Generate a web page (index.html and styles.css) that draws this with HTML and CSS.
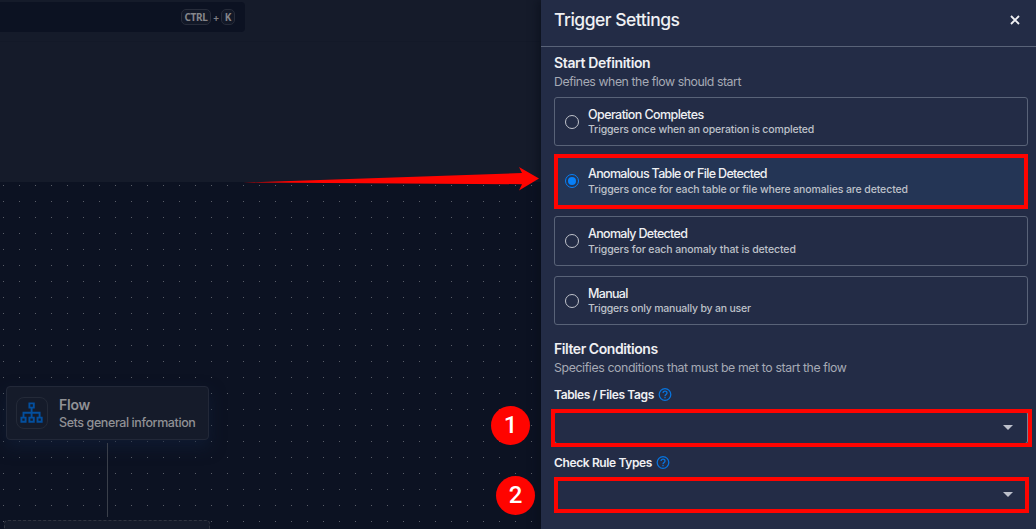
FILE: index.html
```html
<!DOCTYPE html>
<html lang="en">
<head>
<meta charset="utf-8">
<title>Trigger Settings</title>
<link rel="stylesheet" href="styles.css">
</head>
<body>
<div class="app">
  <main class="workspace">
    <header class="topbar">
      <div class="search"><kbd class="key key-ctrl">CTRL</kbd><span class="plus">+</span><kbd class="key key-k">K</kbd></div>
    </header>
    <section class="summary"></section>
    <section class="canvas">
      <div class="node">
        <div class="node-icon">
          <svg width="24" height="22" viewBox="0 0 24 22" fill="none" stroke="#034f9e" stroke-width="1.9"><path d="M9.4 1.4h4.4v4.2H9.4zM1.4 15.6h4.2v4.2H1.4zM9.4 15.6h4.4v4.2H9.4zM17.5 15.6h4.2v4.2h-4.2zM11.6 5.6v10M3.5 15.6v-4.8h16.1v4.8"/></svg>
        </div>
        <div class="node-copy">
          <div class="node-title">Flow</div>
          <div class="node-sub">Sets general information</div>
        </div>
      </div>
      <div class="edge"></div>
      <div class="node-next"></div>
    </section>
  </main>
  <aside class="panel">
    <header class="panel-head">
      <h1 class="title">Trigger Settings</h1>
      <svg class="close" width="10" height="10" viewBox="0 0 10 10" stroke="#f0f1f4" stroke-width="1.9"><path d="M1 1l8 8M9 1L1 9"/></svg>
    </header>
    <div class="panel-body">
      <h2 class="heading start-heading">Start Definition</h2>
      <p class="lead start-lead">Defines when the flow should start</p>
      <div class="options">
        <div class="option">
          <span class="radio"></span>
          <div><div class="name n1">Operation Completes</div><div class="desc d1">Triggers once when an operation is completed</div></div>
        </div>
        <div class="option selected">
          <span class="radio checked"></span>
          <div><div class="name n2">Anomalous Table or File Detected</div><div class="desc d2">Triggers once for each table or file where anomalies are detected</div></div>
        </div>
        <div class="option">
          <span class="radio"></span>
          <div><div class="name n3">Anomaly Detected</div><div class="desc d3">Triggers for each anomaly that is detected</div></div>
        </div>
        <div class="option">
          <span class="radio"></span>
          <div><div class="name n4">Manual</div><div class="desc d4">Triggers only manually by an user</div></div>
        </div>
      </div>
      <h2 class="heading filter-heading">Filter Conditions</h2>
      <p class="lead filter-lead">Specifies conditions that must be met to start the flow</p>
      <div class="label label-tags"><span class="l1">Tables / Files Tags</span>
        <svg width="14" height="14" viewBox="0 0 14 14" fill="none" stroke="#0873dc" stroke-width="1.3"><circle cx="7" cy="7.5" r="5.8"/><path d="M5.1 6.1C5.1 3.5 9 3.5 9 6C9 7.5 7 7.5 7 9.3M7 10v1.3"/></svg>
      </div>
      <div class="select select-tags"><i class="caret"></i></div>
      <div class="label label-rules"><span class="l2">Check Rule Types</span>
        <svg width="14" height="14" viewBox="0 0 14 14" fill="none" stroke="#0873dc" stroke-width="1.3"><circle cx="7" cy="7.5" r="5.8"/><path d="M5.1 6.1C5.1 3.5 9 3.5 9 6C9 7.5 7 7.5 7 9.3M7 10v1.3"/></svg>
      </div>
      <div class="select"><i class="caret"></i></div>
    </div>
  </aside>
  <svg class="arrow" width="300" height="28" viewBox="0 0 300 28" fill="#ff0400"><path d="M2 15.5L281 6L278 0L298 11.5L278 23.5L281 17.2L2 15.5z"/></svg>
  <div class="mark mark-option"></div>
  <div class="mark mark-tags"></div>
  <div class="mark mark-rules"></div>
  <div class="badge badge-one">1</div>
  <div class="badge badge-two">2</div>
</div>
</body>
</html>
```
FILE: styles.css
```css
* { box-sizing: border-box; }
body { margin: 0; font-family: Inter, "Open Sans", sans-serif; background: #0c1222; }
h1, h2, p { margin: 0; }
.app { position: relative; display: flex; width: 1036px; height: 529px; overflow: hidden; white-space: nowrap; }

.workspace { display: flex; flex-direction: column; width: 541px; background: #0c1222; }
.topbar { flex: none; height: 42px; padding-top: 2px; background: #151b2a; border-bottom: 1px solid #131928; }
.search { display: flex; align-items: center; justify-content: flex-end; width: 245px; height: 30px; padding-right: 10px; background: #0c1222; border-radius: 0 4px 4px 0; color: #7b7d83; }
.key { display: flex; align-items: center; justify-content: center; height: 16px; border: 1px solid #272c3a; border-radius: 5px; background: #121827; font: 700 10px "Noto Sans", sans-serif; letter-spacing: -.3px; color: #85868b; }
.key-ctrl { width: 30px; }
.key-k { width: 14px; }
.plus { width: 10px; text-align: center; font-size: 10px; font-weight: 600; }
.summary { flex: none; height: 140px; background: #151b2a; }
.canvas { flex: 1; min-height: 0; padding: 204px 0 0 6px; background-image: radial-gradient(circle at 3.5px 3.5px, #5a5e68 0, #5a5e68 .6px, transparent .9px); background-size: 16px 16px; }
.node { display: flex; align-items: center; width: 203px; height: 54px; padding-left: 9px; border: 1px solid #222838; border-radius: 4px; background: #151b2a; box-shadow: 0 7px 16px #10203b99; color: #909195; }
.node-icon { display: flex; align-items: center; justify-content: center; width: 32px; height: 32px; margin-right: 11px; border: 1px solid #242a38; border-radius: 8px; }
.node-copy { padding-top: 2px; }
.node-title { font-size: 14px; line-height: 18px; font-weight: 600; letter-spacing: -.25px; }
.node-sub { font-size: 12.5px; line-height: 18px; font-weight: 500; letter-spacing: -.41px; }
.edge { width: 1px; height: 74px; margin: 3px 0 3px 101px; background: #3a3f4a; }
.node-next { width: 206px; height: 12px; margin-left: -2px; border: 1px dashed #30343f; border-bottom: 0; border-radius: 4px 4px 0 0; background: #151b2a; }

.panel { width: 495px; background: #232c46; box-shadow: -3px 0 8px #080d1999; color: #eff0f3; }
.panel-head { display: flex; align-items: center; justify-content: space-between; height: 47px; padding: 0 16px 7px 13px; border-bottom: 1px solid #596378; }
.title { font-size: 17.5px; line-height: 24px; font-weight: 500; letter-spacing: -.5px; }
.panel-body { padding: 6px 8px 0 13px; }
.heading { font-size: 14px; line-height: 19px; font-weight: 600; }
.start-heading { letter-spacing: -.35px; }
.lead { margin-top: 1px; font-size: 12.3px; line-height: 18px; color: #a6aab5; }
.start-lead { letter-spacing: -.44px; }
.options { display: grid; grid-template-rows: 49px 50px 50px 49px; row-gap: 10px; margin-top: 6px; }
.option { display: flex; align-items: center; padding-left: 10px; border: 1px solid #596378; border-radius: 3px; }
.option.selected { background: #243555; }
.radio { display: flex; align-items: center; justify-content: center; width: 14px; height: 14px; margin-right: 9px; border: 1.4px solid #c0c3cb; border-radius: 50%; }
.checked { border-color: #0880f7; }
.checked::after { content: ""; width: 8px; height: 8px; background: #0880f7; border-radius: 50%; }
.name { font-size: 12.5px; line-height: 16px; font-weight: 500; }
.n1 { letter-spacing: -.58px; }
.n2, .n3, .n4 { letter-spacing: -.68px; }
.desc { font-size: 10.5px; line-height: 14px; font-weight: 500; color: #bec1c9; }
.d1 { letter-spacing: -.15px; }
.d2, .d3 { padding-top: 1px; letter-spacing: -.11px; }
.d4 { letter-spacing: -.2px; }
.filter-heading { margin-top: 14px; letter-spacing: -.44px; }
.filter-lead { letter-spacing: -.38px; }
.label { display: flex; align-items: center; gap: 4px; height: 18px; font-size: 12px; font-weight: 600; letter-spacing: -.37px; }
.label-tags { margin-top: 8px; }
.label-rules { margin-top: 9px; }
.select { display: flex; align-items: center; justify-content: flex-end; height: 33px; margin-top: 7px; padding-right: 14px; border: 1px solid #788090; border-radius: 3px; }
.select-tags { margin-top: 8px; }
.caret { border: 5px solid transparent; border-top-color: #bcc0cb; border-bottom: 0; }

.arrow { position: absolute; left: 241px; top: 167px; }
.mark { position: absolute; border: 4px solid #ff0400; }
.mark-option { left: 554px; top: 154px; width: 474px; height: 55px; }
.mark-tags { left: 551px; top: 409px; width: 481px; height: 38px; }
.mark-rules { left: 554px; top: 477px; width: 475px; height: 36px; }
.badge { position: absolute; display: flex; align-items: center; justify-content: center; width: 39px; height: 39px; padding-bottom: 2px; border-radius: 50%; background: #ff0400; color: #fff; font: 500 24px Roboto, sans-serif; }
.badge-one { left: 491px; top: 406px; }
.badge-two { left: 496px; top: 476px; }
```
